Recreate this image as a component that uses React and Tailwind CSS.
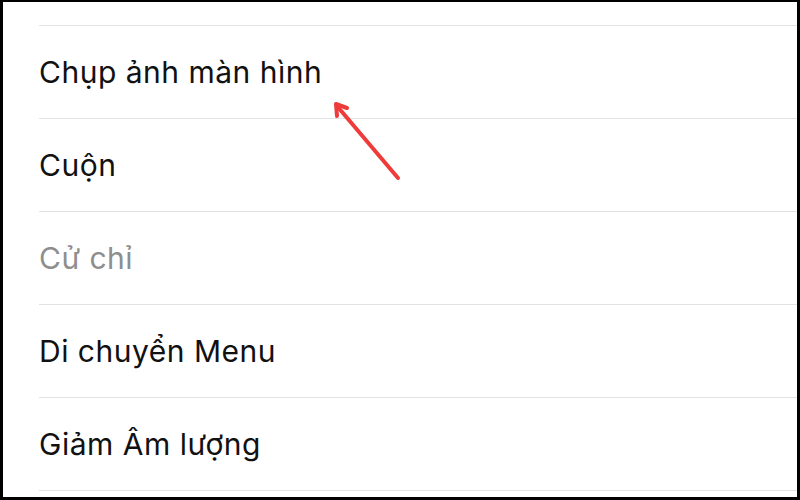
import React from 'react';

const items = [
  { label: 'Chụp ảnh màn hình' },
  { label: 'Cuộn' },
  { label: 'Cử chỉ', muted: true },
  { label: 'Di chuyển Menu' },
  { label: 'Giảm Âm lượng' },
];

const App = () => {
  return (
    <div
      className="relative w-[800px] h-[500px] bg-white border-black border-l-[3px] border-r-[3px] border-t-2 border-b-[3px] overflow-hidden"
      style={{ fontFamily: 'Inter, "Noto Sans", sans-serif' }}
    >
      <div className="h-[23px]" />
      <ul className="ml-[36px] border-b border-[#e2e2e2]">
        {items.map((item) => (
          <li
            key={item.label}
            className={`h-[93px] flex items-center border-t border-[#e2e2e2] text-[30px] tracking-[0.5px] ${
              item.muted ? 'text-[#8e8e8e]' : 'text-[#111111]'
            }`}
          >
            {item.label}
          </li>
        ))}
      </ul>

      {/* red annotation arrow */}
      <svg
        className="absolute left-0 top-0 pointer-events-none"
        width="800"
        height="500"
        viewBox="3 2 800 500"
      >
        <g stroke="#f03b3b" strokeWidth="4" strokeLinecap="round" strokeLinejoin="round" fill="none">
          <line x1="398" y1="178" x2="337" y2="106" />
          <polyline points="347,108 336,104 337,116" />
        </g>
      </svg>
    </div>
  );
};

export default App;
